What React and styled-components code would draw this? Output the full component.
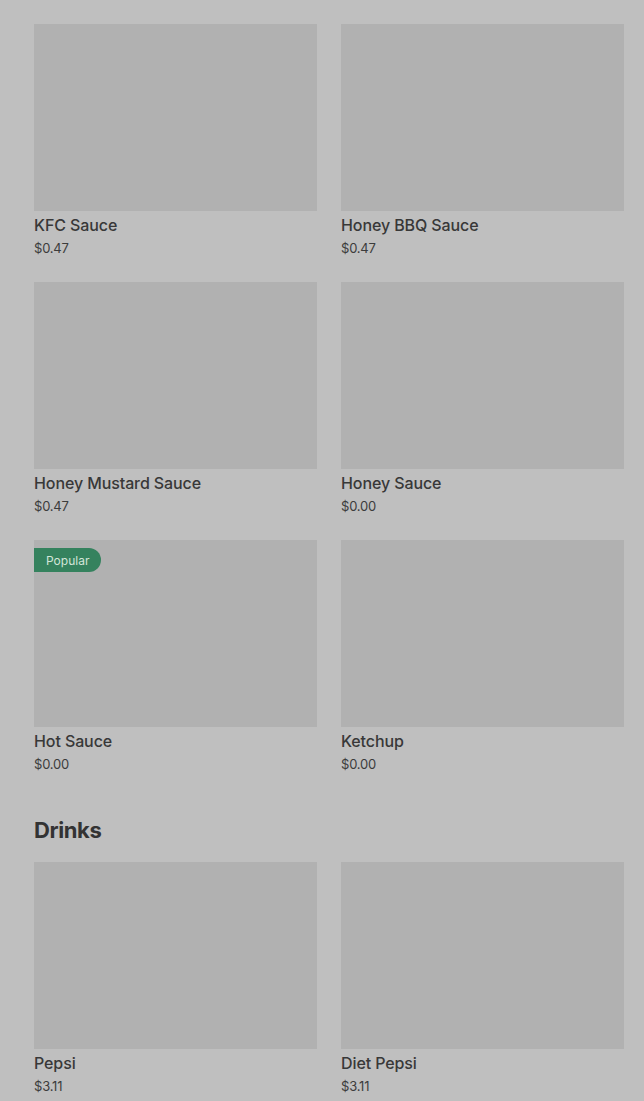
import styled, { createGlobalStyle } from "styled-components";

const GlobalStyle = createGlobalStyle`
  html, body {
    margin: 0;
    padding: 0;
    background: #bfbfbf;
    font-family: Inter, "Liberation Sans", sans-serif;
    color: #383838;
  }
`

const Page = styled.div`
  padding: 24px 20px 0 34px;
`

const Section = styled.section`
  & + & {
    margin-top: 42px;
  }
`

const Heading = styled.h2`
  margin: 0 0 18px;
  font-size: 22px;
  line-height: 28px;
  font-weight: 700;
  letter-spacing: -0.4px;
  color: #333;
`

const Grid = styled.div`
  display: grid;
  grid-template-columns: 1fr 1fr;
  column-gap: 24px;
  row-gap: 24px;
`

const Card = styled.div`
  display: flex;
  flex-direction: column;
`

const Thumb = styled.div`
  position: relative;
  height: 187px;
  background: #b1b1b1;
`

const Badge = styled.span`
  position: absolute;
  top: 8px;
  left: 0;
  height: 24px;
  padding: 0 12px;
  display: flex;
  align-items: center;
  background: #35825e;
  color: #d3e5d9;
  font-size: 12px;
  border-radius: 0 12px 12px 0;
`

const Name = styled.div`
  margin-top: 2px;
  font-size: 16px;
  line-height: 24px;
  font-weight: 500;
  letter-spacing: -0.1px;
`

const Price = styled.div`
  margin-top: 1px;
  font-size: 13px;
  line-height: 20px;
  letter-spacing: -0.2px;
  color: #3c3c3c;
`

const sauces = [
  { name: "KFC Sauce", price: "$0.47" },
  { name: "Honey BBQ Sauce", price: "$0.47" },
  { name: "Honey Mustard Sauce", price: "$0.47" },
  { name: "Honey Sauce", price: "$0.00" },
  { name: "Hot Sauce", price: "$0.00", popular: true },
  { name: "Ketchup", price: "$0.00" },
]

const drinks = [
  { name: "Pepsi", price: "$3.11" },
  { name: "Diet Pepsi", price: "$3.11" },
]

const Item = ({ item }) => (
  <Card>
    <Thumb>{item.popular && <Badge>Popular</Badge>}</Thumb>
    <Name>{item.name}</Name>
    <Price>{item.price}</Price>
  </Card>
)

const App = () => (
  <>
    <GlobalStyle />
    <Page>
      <Section>
        <Grid>
          {sauces.map((s) => <Item key={s.name} item={s} />)}
        </Grid>
      </Section>
      <Section>
        <Heading>Drinks</Heading>
        <Grid>
          {drinks.map((d) => <Item key={d.name} item={d} />)}
        </Grid>
      </Section>
    </Page>
  </>
)

export default App
